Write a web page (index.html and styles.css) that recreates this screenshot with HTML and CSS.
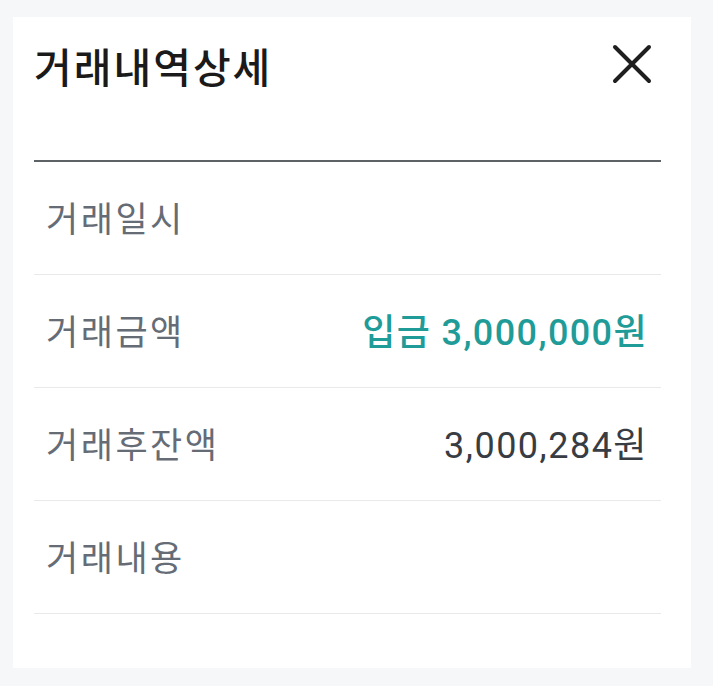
FILE: index.html
```html
<!DOCTYPE html>
<html lang="ko">
<head>
<meta charset="utf-8">
<link rel="stylesheet" href="styles.css">
</head>
<body>
<div class="card">
  <div class="header">
    <h1 class="title">거래내역상세</h1>
    <button class="close" aria-label="닫기">
      <svg width="40" height="40" viewBox="0 0 40 40"><path d="M3 3 L37 37 M37 3 L3 37" stroke="#1f1f1f" stroke-width="4" stroke-linecap="round"/></svg>
    </button>
  </div>
  <div class="row"><span class="label">거래일시</span><span class="value"></span></div>
  <div class="row"><span class="label">거래금액</span><span class="value deposit">입금 3,000,000원</span></div>
  <div class="row"><span class="label">거래후잔액</span><span class="value">3,000,284원</span></div>
  <div class="row"><span class="label">거래내용</span><span class="value"></span></div>
</div>
</body>
</html>
```

FILE: styles.css
```css
html, body { margin: 0; padding: 0; }
body {
  background: #f6f7f9;
  font-family: "Noto Sans CJK KR", "Noto Sans", sans-serif;
  padding: 17px 22px 18px 13px;
}
.card {
  background: #fff;
  height: 651px;
  box-sizing: border-box;
  padding: 0 30px 0 21px;
}
.header {
  height: 143px;
  border-bottom: 2px solid #5d6266;
  display: flex;
  justify-content: space-between;
  align-items: flex-start;
}
.title {
  margin: 0;
  padding-top: 20px;
  padding-left: 0;
  font-size: 41px;
  font-weight: 500;
  color: #1a1a1a;
  line-height: 56px;
  letter-spacing: 2px;
}
.close {
  border: 0;
  background: none;
  padding: 0;
  margin-top: 27px;
  margin-right: 9px;
  width: 40px;
  height: 40px;
}
.close svg { display: block; }
.row {
  height: 112px;
  border-bottom: 1px solid #e8e9eb;
  display: flex;
  justify-content: space-between;
  align-items: center;
  padding: 0 14px 0 12px;
}
.label {
  font-size: 35px;
  color: #656c76;
  letter-spacing: 2.5px;
  margin-top: -4px;
}
.value {
  font-family: "Roboto", "Noto Sans CJK KR", sans-serif;
  font-size: 36px;
  color: #383c43;
  letter-spacing: 1.5px;
  margin-top: -4px;
  margin-right: -1px;
}
.value.deposit {
  color: #1f9c98;
  font-weight: 500;
  letter-spacing: 1.4px;
}
```
